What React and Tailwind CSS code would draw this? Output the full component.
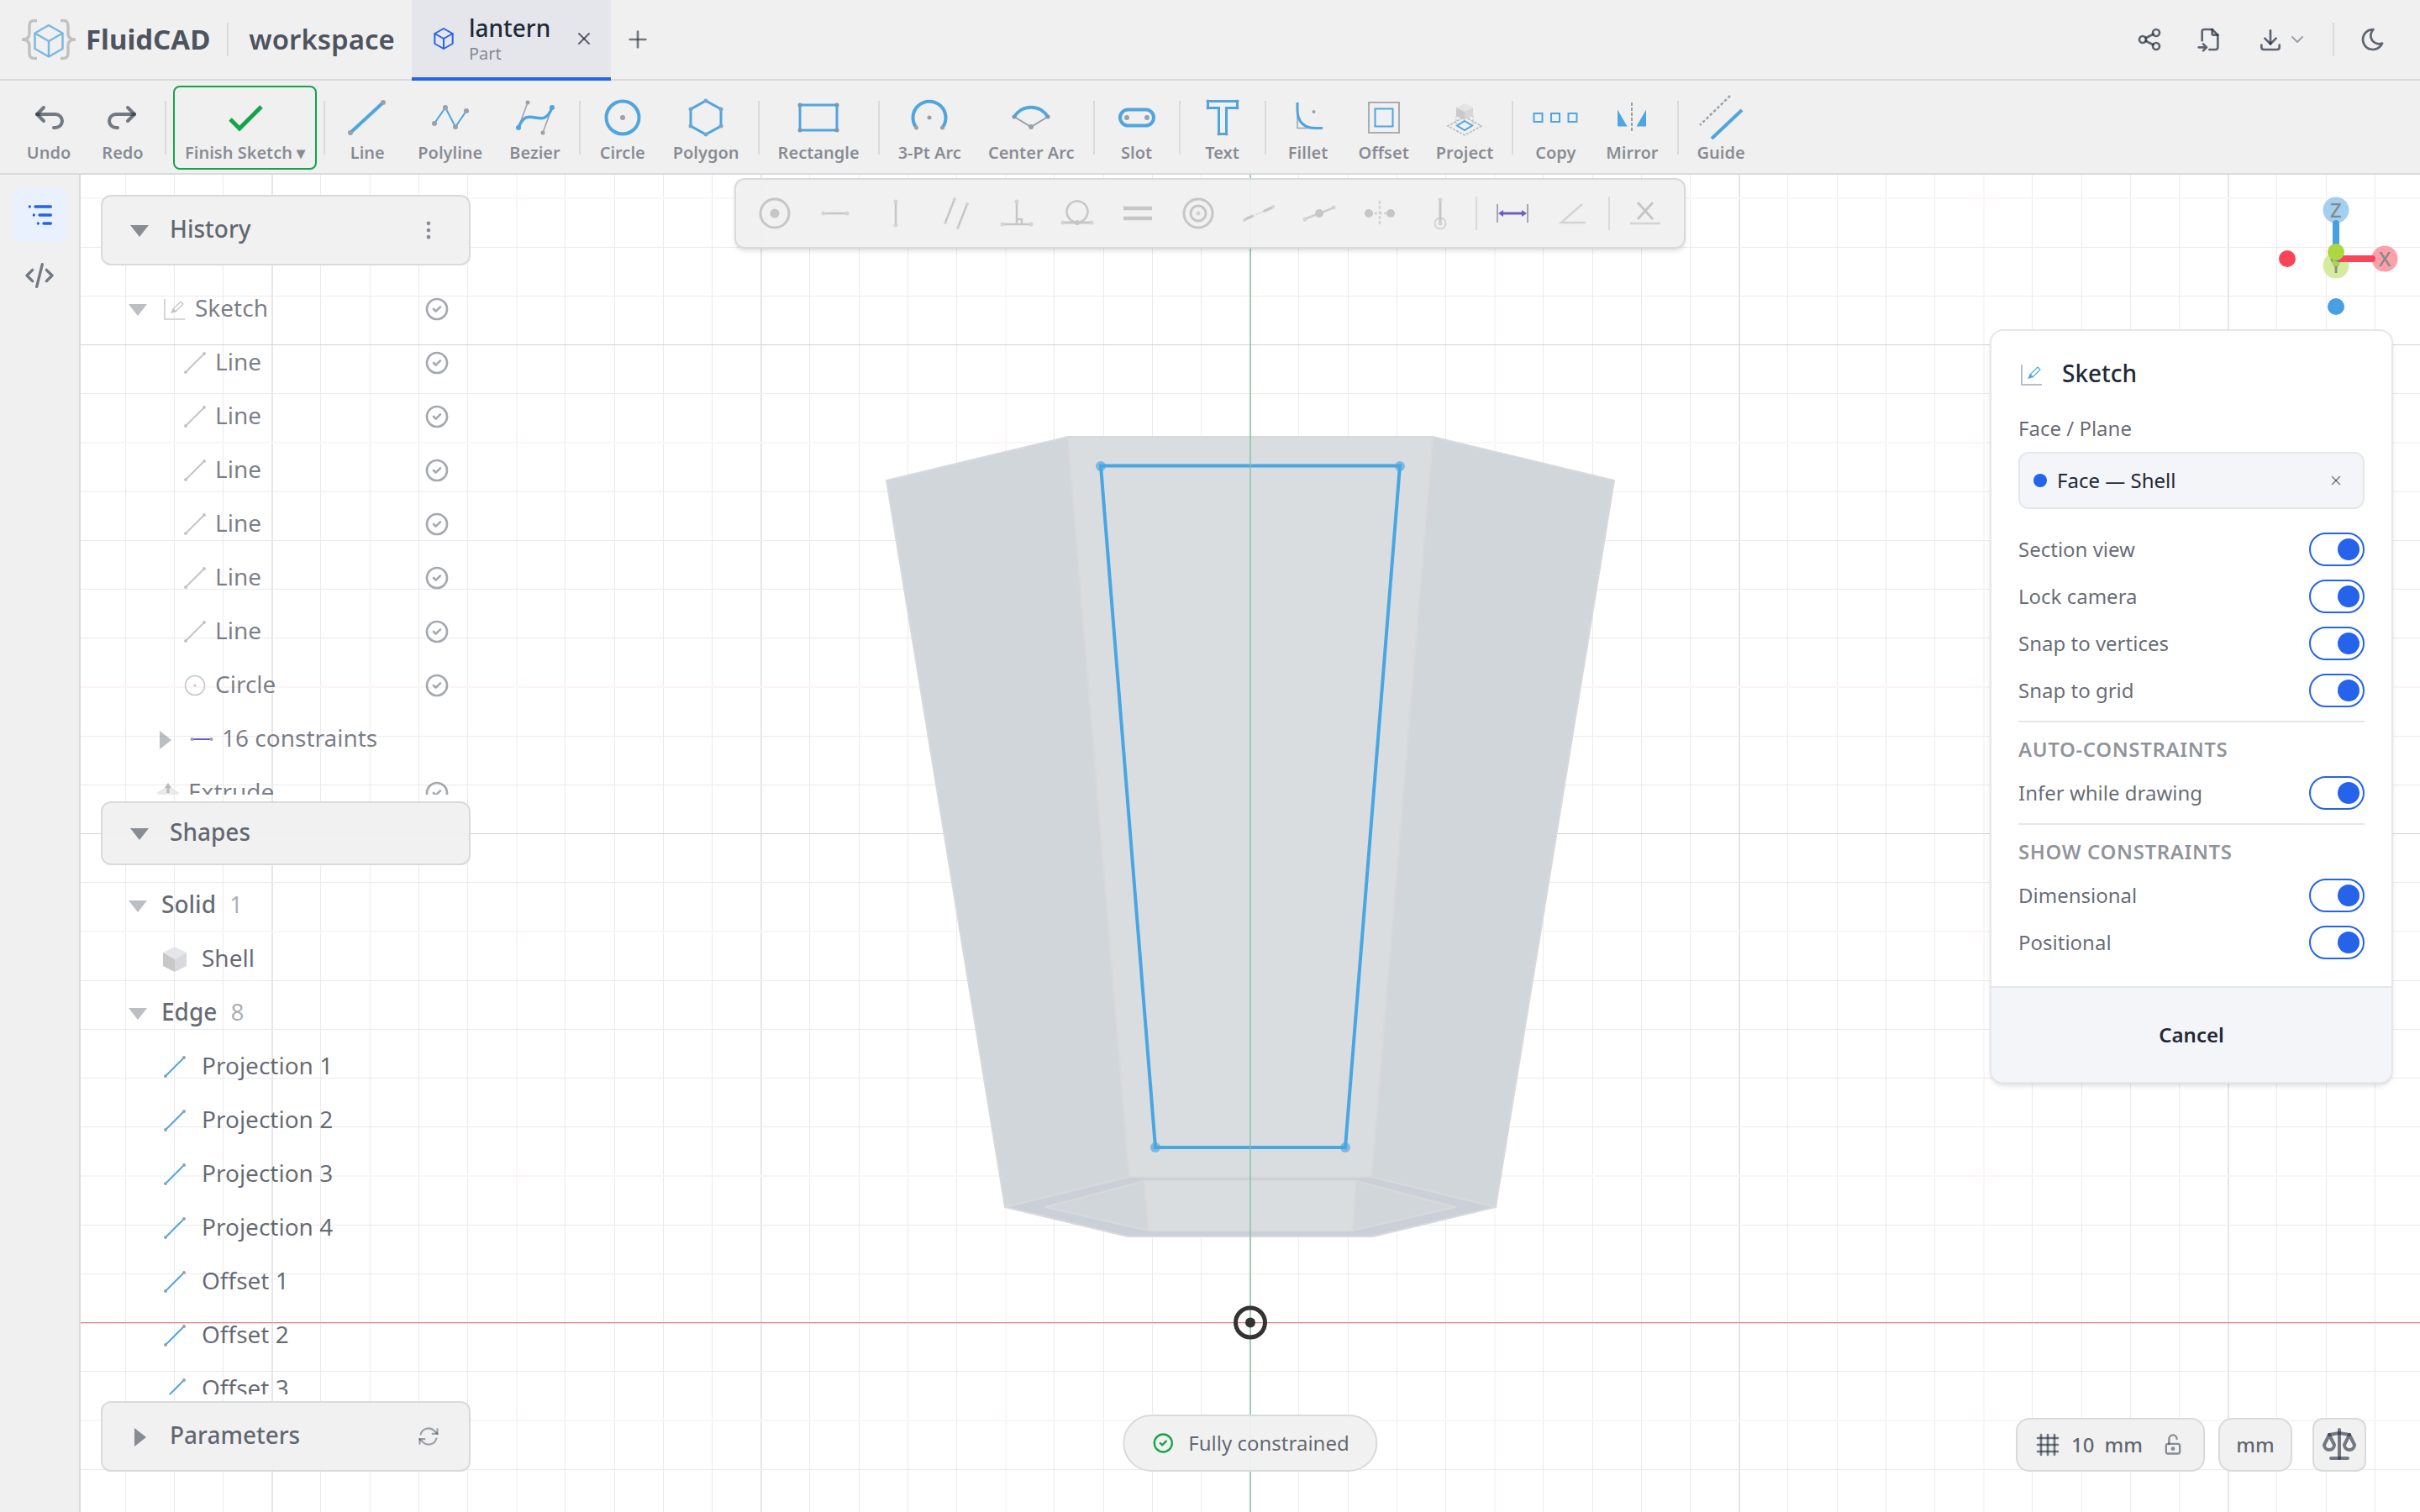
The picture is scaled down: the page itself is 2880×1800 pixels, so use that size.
import { useState } from "react";
import {
  TbArrowBackUp,
  TbArrowForwardUp,
  TbBox,
  TbChevronDown,
  TbCircleCheck,
  TbCode,
  TbDotsVertical,
  TbDownload,
  TbFileImport,
  TbGrid4X4,
  TbListTree,
  TbLockOpen,
  TbMoon,
  TbPlus,
  TbScale,
  TbShare,
  TbX,
} from "react-icons/tb";

const BLUE = "#4ea5e0";
const GREY = "#9aa0a8";
const MUTED = "#c5c6c7";
const FAINT = "#d3d4d5";
const PURPLE = "#6f5bc8";

const Dots = ({ points, fill = GREY, r = 3 }) =>
  points.map(([x, y]) => (
    <circle key={`${x},${y}`} cx={x} cy={y} r={r} fill={fill} stroke="none" />
  ));

// Drawings of the sketch tools, centred on 0,0 in a 60px box
const toolIcons = {
  finish: <path d="M-18 2L-7 13L19 -13" stroke="#16a34a" strokeWidth="5" />,
  line: (
    <>
      <path d="M-20 18L19 -18" strokeWidth="4" />
      <Dots points={[[-20, 18], [19, -18]]} />
    </>
  ),
  polyline: (
    <>
      <path d="M-19 7L-6 -12L6 11L19 -8" strokeWidth="2" />
      <Dots points={[[-19, 7], [-6, -12], [6, 11], [19, -8]]} />
    </>
  ),
  bezier: (
    <>
      <path d="M-20 12L-9 -18M20 -12L9 18" stroke={GREY} strokeWidth="1.5" />
      <path d="M-20 12C-9 -18 9 18 20 -12" strokeWidth="3.5" />
      <Dots points={[[-9, -18], [9, 18]]} r={2.5} />
      <Dots points={[[-20, 12], [20, -12]]} fill={BLUE} />
    </>
  ),
  circle: (
    <>
      <circle r="19.5" strokeWidth="4" />
      <Dots points={[[0, 0]]} />
    </>
  ),
  polygon: (
    <>
      <path d="M0 -20L18 -10V10L0 20L-18 10V-10Z" strokeWidth="3" />
      <Dots points={[[0, -20], [18, -10], [18, 10], [0, 20], [-18, 10], [-18, -10]]} fill="#7aa5c6" r={2.5} />
    </>
  ),
  rectangle: (
    <>
      <path d="M-22 -15H22V15H-22Z" strokeWidth="3" />
      <Dots points={[[-22, -15], [22, -15], [22, 15], [-22, 15]]} fill="#7b98ae" r={2.5} />
    </>
  ),
  arc3: (
    <>
      <path d="M-15.5 12A19.5 19.5 0 1 1 15.5 12" strokeWidth="4" />
      <Dots points={[[0, 0], [-15.5, 12], [15.5, 12]]} r={2.5} />
    </>
  ),
  centerArc: (
    <>
      <path d="M-20 -1L0 11L20 -1" stroke={GREY} strokeWidth="2" />
      <path d="M-20 -1A23.3 23.3 0 0 1 20 -1" strokeWidth="4" />
      <Dots points={[[0, 11]]} />
      <Dots points={[[-20, -1], [20, -1]]} fill="#7b98ae" r={2.5} />
    </>
  ),
  slot: (
    <>
      <rect x="-20" y="-9.5" width="40" height="19" rx="9.5" strokeWidth="4" />
      <Dots points={[[-12, 0], [12, 0]]} />
    </>
  ),
  text: (
    <>
      <path d="M-17.5 -19.5H17.5V-11.5H4.5V19.5H-4.5V-11.5H-17.5Z" strokeWidth="3" />
      <Dots points={[[-17.5, -19.5], [17.5, -19.5], [-17.5, -11.5], [17.5, -11.5], [4.5, 19.5], [-4.5, 19.5]]} fill="#6b9dc4" r={2} />
    </>
  ),
  fillet: (
    <>
      <path d="M-13 -2V12.5H2" stroke={GREY} strokeWidth="1.5" />
      <path d="M-13 -18V-10C-13 5 -6 12.5 9 12.5H17" strokeWidth="3" />
      <Dots points={[[6.5, -7]]} r={2} />
    </>
  ),
  offset: (
    <>
      <rect x="-18" y="-18" width="36" height="36" stroke="#a8adb4" strokeWidth="2" />
      <rect x="-10.5" y="-10.5" width="21" height="21" strokeWidth="2" />
    </>
  ),
  project: (
    <>
      <path d="M0 -1L20 10L0 21L-20 10Z" stroke="#b3b5b8" strokeWidth="1.5" strokeDasharray="3 1.5" />
      <path d="M0 4L9 9.5L0 15L-9 9.5Z" strokeWidth="2" />
      <path d="M0 -17L10 -12L0 -7L-10 -12Z" fill="#e3e4e6" stroke="none" />
      <path d="M-10 -12L0 -7V3L-10 -2Z" fill="#c9c9ca" stroke="none" />
      <path d="M10 -12L0 -7V3L10 -2Z" fill="#d6d7d9" stroke="none" />
      <path d="M-10 -2V8M10 -2V8" stroke="#b3b5b8" strokeDasharray="2 2" />
    </>
  ),
  copy: (
    <g strokeWidth="2">
      <rect x="-25.5" y="-5" width="10" height="10" />
      <rect x="-5" y="-5" width="10" height="10" />
      <rect x="15.5" y="-5" width="10" height="10" />
    </g>
  ),
  mirror: (
    <>
      <path d="M0 -18V18" stroke={GREY} strokeWidth="2" strokeDasharray="4 2" />
      <path d="M-17 -9.5L-5.5 10.5H-17ZM17 -9.5L5.5 10.5H17Z" fill={BLUE} stroke="none" />
    </>
  ),
  guide: (
    <>
      <path d="M11 -26L-25 9" stroke={GREY} strokeWidth="2.5" strokeDasharray="3.5 2.5" />
      <path d="M25 -9L-11 25" strokeWidth="4" />
    </>
  ),
};

const toolGroups = [
  [
    ["Line", "line"],
    ["Polyline", "polyline"],
    ["Bezier", "bezier"],
  ],
  [
    ["Circle", "circle"],
    ["Polygon", "polygon"],
  ],
  [["Rectangle", "rectangle"]],
  [
    ["3-Pt Arc", "arc3"],
    ["Center Arc", "centerArc"],
  ],
  [["Slot", "slot"]],
  [["Text", "text"]],
  [
    ["Fillet", "fillet"],
    ["Offset", "offset"],
    ["Project", "project"],
  ],
  [
    ["Copy", "copy"],
    ["Mirror", "mirror"],
  ],
  [["Guide", "guide"]],
];

const constraintGroups = [
  [
    ["Coincident", <><circle r="17" strokeWidth="3" /><Dots points={[[0, 0]]} fill={MUTED} r={5.5} /></>],
    ["Horizontal", <><path d="M-14 0H14" strokeWidth="2.5" /><Dots points={[[-14, 0], [14, 0]]} fill={FAINT} r={2.5} /></>],
    ["Vertical", <><path d="M0 -14V14" strokeWidth="2.5" /><Dots points={[[0, -14], [0, 14]]} fill={FAINT} r={2.5} /></>],
    ["Parallel", <><path d="M-2 -17L-13 11M13 -11L2 17" strokeWidth="2.5" /><Dots points={[[-2, -17], [-13, 11], [13, -11], [2, 17]]} fill={FAINT} r={2} /></>],
    ["Perpendicular", <><path d="M-17 13H17M0 -14V13M0 7H6V13" strokeWidth="2.5" /><Dots points={[[-17, 13], [17, 13], [0, -14]]} fill={FAINT} r={2.5} /></>],
    ["Tangent", <><circle cy="-2" r="12.5" strokeWidth="2.5" /><path d="M-17 11H17" strokeWidth="3" /><Dots points={[[0, 11]]} fill={MUTED} /><Dots points={[[-17, 11], [17, 11]]} fill={FAINT} r={2.5} /></>],
    ["Equal", <path d="M-17 -6H17M-17 6H17" strokeWidth="4.5" />],
    ["Concentric", <><circle r="17" strokeWidth="3" /><circle r="9" strokeWidth="3" /><Dots points={[[0, 0]]} fill={FAINT} r={2.5} /></>],
    ["Collinear", <><path d="M-16 7L-7 3M6 -2.5L16 -7" strokeWidth="3.5" /><path d="M-7 3L6 -2.5" stroke={FAINT} strokeWidth="2" strokeDasharray="2 2" /><Dots points={[[-17, 8], [17, -8]]} fill={FAINT} r={2} /></>],
    ["Midpoint", <><path d="M-18 7L18 -7" stroke="#cdcecf" strokeWidth="2.5" /><Dots points={[[0, 0]]} fill={MUTED} r={5} /><Dots points={[[-17, 7], [17, -7]]} fill={FAINT} r={2.5} /></>],
    ["Symmetric", <><path d="M-13 0H13M0 -15V15" stroke={FAINT} strokeWidth="2.5" strokeDasharray="4 2" /><Dots points={[[-13, 0], [13, 0]]} fill={MUTED} r={5} /></>],
    ["Fix", <><circle cy="12" r="6.5" stroke={FAINT} strokeWidth="2" /><path d="M0 -16V12" strokeWidth="3" /><Dots points={[[0, -16], [0, 12]]} fill={FAINT} r={2.5} /></>],
  ],
  [
    ["Dimension", <><path d="M-18 -11V11M18 -11V11" stroke="#a3a7b0" strokeWidth="2" /><path d="M-14 0H14" stroke={PURPLE} strokeWidth="3" /><path d="M-17 0L-11 -4V4ZM17 0L11 -4V4Z" fill={PURPLE} stroke="none" /></>],
    ["Angle", <path d="M11 -11L-14 11H15" stroke={FAINT} strokeWidth="2.5" />],
  ],
  [
    ["Remove constraint", <><path d="M-9 -13L9 7M9 -13L-9 7" strokeWidth="3" /><path d="M-18 12H18" stroke={FAINT} strokeWidth="2.5" /></>],
  ],
];

const Separator = ({ className = "h-16 mx-1" }) => (
  <span className={`w-0.5 shrink-0 bg-[#d9dadb] ${className}`} />
);

const Caret = ({ open, className }) => (
  <svg viewBox="-12 -12 24 24" className={`size-6 shrink-0 ${className}`} fill="currentColor">
    <path d={open ? "M-11 -6H11L0 8Z" : "M-6 -10V12L8 1Z"} />
  </svg>
);

const Logo = () => (
  <svg viewBox="0 0 68 52" className="h-[52px] w-[68px] shrink-0" fill="none">
    <g stroke="#c0c1c2" strokeWidth="3.5">
      <path d="M20 3.5H17C12 3.5 11 6 11 10V19C11 24 8 26 2 26C8 26 11 28 11 33V42C11 46 12 48.5 17 48.5H20" />
      <path d="M48 3.5H51C56 3.5 57 6 57 10V19C57 24 60 26 66 26C60 26 57 28 57 33V42C57 46 56 48.5 51 48.5H48" />
    </g>
    <path
      d="M34 9L50.5 18.5V37L34 46.5L17.5 37V18.5ZM17.5 18.5L34 28L50.5 18.5M34 28V46.5"
      stroke="#7ab8e3"
      strokeWidth="2.5"
      strokeLinejoin="round"
    />
  </svg>
);

const Header = () => (
  <header className="flex h-24 items-stretch border-b-2 border-[#d9dadb] bg-[#f0f0f0] pl-6">
    <div className="flex items-center">
      <Logo />
      <h1 className="ml-2.5 text-[33px] font-bold text-[#1f2937]/80">FluidCAD</h1>
      <Separator className="mr-6 ml-5 h-10" />
      <span className="text-[33px] font-semibold text-[#1f2937]/80">workspace</span>
    </div>
    <div className="-mb-0.5 ml-5 flex items-center gap-3.5 border-b-4 border-[#2563eb] bg-[#e4e6eb] pr-5 pl-5.5">
      <TbBox className="size-8 stroke-[1.5] text-[#2563eb]" />
      <div className="pr-3.5">
        <div className="text-[28px] leading-9 font-medium text-[#1f2937]">lantern</div>
        <div className="text-xl leading-[26px] text-[#1f2937]/50">Part</div>
      </div>
      <button aria-label="Close tab" className="text-[#1f2937]/70">
        <TbX className="size-6" />
      </button>
    </div>
    <button aria-label="New tab" className="ml-4 text-[#1f2937]/60">
      <TbPlus className="size-8" />
    </button>
    <div className="ml-auto flex items-center pr-10 text-[#1f2937]/70">
      <button aria-label="Share" className="mr-10">
        <TbShare className="size-8" />
      </button>
      <button aria-label="Import" className="mr-10">
        <TbFileImport className="size-8" />
      </button>
      <button aria-label="Export" className="flex items-center gap-1">
        <TbDownload className="size-8" />
        <TbChevronDown className="size-6 text-[#1f2937]/40" />
      </button>
      <Separator className="mx-7.5 h-10" />
      <button aria-label="Dark mode">
        <TbMoon className="size-8" />
      </button>
    </div>
  </header>
);

const ToolButton = ({ label, active, children }) => (
  <button
    className={`flex shrink-0 flex-col items-center rounded-lg border-2 px-3 py-1.5 ${
      active ? "border-[#16a34a]" : "border-transparent"
    }`}
  >
    <span className="flex h-15 w-14 items-center justify-center">{children}</span>
    <span className="text-xl leading-6 font-semibold whitespace-nowrap text-[#1f2937]/50">{label}</span>
  </button>
);

const ToolIcon = ({ name }) => (
  <svg viewBox="-30 -30 60 60" className="size-15 shrink-0" fill="none" stroke={BLUE}>
    {toolIcons[name]}
  </svg>
);

const SketchToolbar = () => (
  <nav className="flex h-28 items-center gap-1 border-b-2 border-[#d9dadb] bg-[#f0f0f0] px-4 pt-0.5">
    <ToolButton label="Undo">
      <TbArrowBackUp className="size-12 text-[#1f2937]/60" />
    </ToolButton>
    <ToolButton label="Redo">
      <TbArrowForwardUp className="size-12 text-[#1f2937]/60" />
    </ToolButton>
    <Separator />
    <ToolButton label="Finish Sketch ▾" active>
      <ToolIcon name="finish" />
    </ToolButton>
    {toolGroups.map((group) => [
      <Separator key={`${group[0][0]}-sep`} />,
      ...group.map(([label, icon]) => (
        <ToolButton key={label} label={label}>
          <ToolIcon name={icon} />
        </ToolButton>
      )),
    ])}
  </nav>
);

const ConstraintBar = () => (
  <div className="absolute top-1 left-1/2 flex h-21 -translate-x-1/2 items-center gap-1 rounded-xl border-2 border-[#d9dadb] bg-[#f0f0f0]/95 px-3 shadow-md">
    {constraintGroups.map((group, i) => [
      i > 0 && <Separator key={`sep-${i}`} className="mx-1 h-10" />,
      ...group.map(([label, drawing]) => (
        <button key={label} aria-label={label} className="flex h-15 w-17 items-center justify-center">
          <svg viewBox="-24 -24 48 48" className="size-12" fill="none" stroke={MUTED}>
            {drawing}
          </svg>
        </button>
      )),
    ])}
  </div>
);

const CELL = 58.2;
const steps = (from, to) => Array.from({ length: to - from + 1 }, (_, i) => from + i);

const Viewport = () => (
  <svg className="absolute inset-0 size-full" fill="none">
    <svg x="50%" y="1366" overflow="visible" shapeRendering="crispEdges">
      {steps(-25, 25).map((n) => (
        <rect
          key={n}
          x={Math.round(n * CELL - 0.8)}
          y="-1400"
          width={n % 5 === 0 ? 2 : 1}
          height="2000"
          fill={n % 10 === 0 ? "#e6e6e6" : n % 5 === 0 ? "#fbf5f5" : "#ebebeb"}
        />
      ))}
      {steps(-23, 5).map((n) => (
        <rect
          key={n}
          x="-1500"
          y={Math.round(n * CELL)}
          width="3000"
          height={(n + 25) % 5 === 2 ? 2 : 1}
          fill={n % 10 === 0 ? "#d2d3d5" : (n + 25) % 5 === 2 ? "#fbf5f5" : "#ebebeb"}
        />
      ))}
    </svg>
    <svg x="50%" y="0" overflow="visible">
      <g stroke="#d8d9dc" strokeWidth="2" strokeLinejoin="round">
        <path d="M-217 312L-433 364L-292 1229L-144 1193Z" fill="#d1d6da" />
        <path d="M217 312L433 364L292 1229L144 1193Z" fill="#d1d6da" />
        <path d="M-217 312H217L144 1193H-144Z" fill="#dadde0" />
        <path d="M-292 1229L-144 1193H144L292 1229L146 1264H-146Z" fill="#cbd0d8" />
        <path d="M-244 1229L-126 1198H126L244 1229L121 1257H-121Z" fill="#d1d6da" />
        <path d="M-126 1198H126L121 1257H-121Z" fill="#dadde0" />
      </g>
      <path d="M-178 346.5H178L113 1158H-113Z" stroke="#48a6e3" strokeWidth="4" />
      <g opacity="0.65">
        <Dots points={[[-178, 347], [178, 347], [113, 1158], [-113, 1158]]} fill="#48a6e3" r={6} />
      </g>
      <path d="M0 0V2000" stroke="#7fc3a1" strokeOpacity="0.7" strokeWidth="2" />
      <path d="M-1500 1366.5H1500" stroke="#d9868d" />
      <path d="M-1500 1367.5H1500" stroke="#f5d8da" />
      <circle cy="1366.5" r="17.5" stroke="#333333" strokeWidth="5" />
      <circle cy="1366.5" r="6" fill="#333333" />
    </svg>
  </svg>
);

const AxisGizmo = () => (
  <svg
    viewBox="0 0 150 150"
    className="absolute top-6 right-6 size-[150px]"
    fontFamily="Noto Sans, sans-serif"
    fontSize="24"
    fontWeight="500"
    textAnchor="middle"
  >
    <circle cx="74" cy="18" r="15.5" fill="#a3cff1" />
    <circle cx="132" cy="76" r="15.5" fill="#fca0ab" />
    <circle cx="74" cy="84" r="15.5" fill="#d5eba0" />
    <text x="74" y="27" fill="#888888">Z</text>
    <text x="132" y="85" fill="#888888">X</text>
    <text x="74" y="93" fill="#888888">Y</text>
    <path d="M74 34V76" stroke="#489fe3" strokeWidth="8" strokeLinecap="round" />
    <path d="M76 76H117" stroke="#f94459" strokeWidth="8" strokeLinecap="round" />
    <path d="M70 74H78V82L74 86L70 82Z" fill="#acd740" />
    <path d="M72 78L76 80L80 78V74H72Z" fill="#489fe3" />
    <path d="M76 80H90V72H80Z" fill="#f94459" />
    <circle cx="74" cy="68" r="10" fill="#acd740" />
    <circle cx="16" cy="76" r="10" fill="#f94459" />
    <circle cx="74" cy="133" r="10" fill="#489fe3" />
  </svg>
);

const RowLine = ({ color }) => (
  <svg viewBox="-16 -16 32 32" className="size-8" fill="none">
    <path d="M-11 11L11 -11" stroke={color} strokeWidth="2" />
    <Dots points={[[-11, 11], [11, -11]]} r={2} fill={color === BLUE ? GREY : color} />
  </svg>
);

const SketchIcon = ({ line = "#c9cacb", pen = "#c0c1c2" }) => (
  <svg viewBox="-16 -16 32 32" className="size-8 shrink-0" fill="none">
    <path d="M-12 -12V12H12" stroke={line} strokeWidth="1.5" />
    <path d="M-2 0L7 -9L10 -6L1 3Z" stroke={pen} strokeWidth="1.2" />
    <path d="M-2 -1L2 3L-5 5Z" fill={pen} />
  </svg>
);

const CubeIcon = () => (
  <svg viewBox="-16 -16 32 32" className="size-8">
    <path d="M0 -15L14 -8L0 0L-14 -8Z" fill="#e5e6e9" />
    <path d="M-14 -8L0 0V15L-14 8Z" fill="#c8c8c9" />
    <path d="M14 -8L0 0V15L14 8Z" fill="#d8d9dc" />
  </svg>
);

const historyRows = [
  { label: "Sketch", open: true, pad: "pl-8", icon: <SketchIcon />, check: true },
  ...Array.from({ length: 6 }, () => ({
    label: "Line",
    pad: "pl-24",
    icon: <RowLine color="#c3c4c6" />,
    check: true,
  })),
  {
    label: "Circle",
    pad: "pl-24",
    check: true,
    icon: (
      <svg viewBox="-16 -16 32 32" className="size-8" fill="none">
        <circle r="11.5" stroke="#c3c4c6" strokeWidth="1.5" />
        <circle r="1.5" fill="#c3c4c6" />
      </svg>
    ),
  },
  {
    label: "16 constraints",
    open: false,
    pad: "pl-16",
    icon: (
      <svg viewBox="-16 -16 32 32" className="size-8">
        <path d="M-11 0H11" stroke={PURPLE} strokeWidth="2" />
        <Dots points={[[-11.5, 0], [11.5, 0]]} r={2} />
      </svg>
    ),
  },
  {
    label: "Extrude",
    pad: "pl-16",
    check: true,
    icon: (
      <svg viewBox="-16 -16 32 32" className="size-8">
        <path d="M0 -9L14 0L0 9L-14 0Z" fill="#e9e9ea" />
        <path d="M0 -10V0" stroke="#b9babc" strokeWidth="3" />
        <path d="M-4 -6L0 -12L4 -6Z" fill="#b9babc" />
      </svg>
    ),
  },
];

const edges = [
  "Projection 1",
  "Projection 2",
  "Projection 3",
  "Projection 4",
  "Offset 1",
  "Offset 2",
  "Offset 3",
];

const SectionHeader = ({ title, open, tall = true, children }) => (
  <div
    className={`flex shrink-0 items-center rounded-xl border-2 border-[#d9dadb] bg-[#f0f0f0]/95 pr-8.5 pl-8 ${
      tall ? "h-21" : "h-19"
    }`}
  >
    <button className="flex flex-1 items-center gap-6">
      <Caret open={open} className="text-[#1f2937]/50" />
      <span className="pb-1 text-[28px] leading-9 font-medium text-[#1f2937]/70">{title}</span>
    </button>
    {children}
  </div>
);

const ScrollArea = ({ children }) => (
  <div className="mb-2 min-h-0 flex-1 basis-0 overflow-hidden">{children}</div>
);

const GroupRow = ({ label, count }) => (
  <li className="flex h-16 items-center pl-8 text-[28px]">
    <Caret open className="mr-4 text-[#1f2937]/30" />
    <span className="pb-1 font-medium text-[#1f2937]/70">{label}</span>
    <span className="ml-4 pb-1 text-[#1f2937]/40">{count}</span>
  </li>
);

const ShapeRow = ({ label, icon }) => (
  <li className="flex h-16 items-center gap-4 pl-18 text-[28px] text-[#1f2937]/70">
    {icon}
    <span className="pb-1">{label}</span>
  </li>
);

const TreePanel = () => (
  <aside className="relative flex w-[464px] flex-col pt-6 pb-12 pl-6">
    <SectionHeader title="History" open>
      <button aria-label="History options" className="text-[#1f2937]/50">
        <TbDotsVertical className="size-7" />
      </button>
    </SectionHeader>
    <ScrollArea>
      <ul className="pt-5">
        {historyRows.map((row, i) => (
          <li key={i} className={`flex h-16 items-center pr-6 ${row.pad}`}>
            {row.open !== undefined && <Caret open={row.open} className="mr-4 text-[#1f2937]/30" />}
            {row.icon}
            <span className="ml-2 pb-1 text-[28px] text-[#1f2937]/60">{row.label}</span>
            {row.check && <TbCircleCheck className="ml-auto size-8 text-[#1f2937]/40" />}
          </li>
        ))}
      </ul>
    </ScrollArea>
    <SectionHeader title="Shapes" open tall={false} />
    <ScrollArea>
      <ul className="pt-4">
        <GroupRow label="Solid" count={1} />
        <ShapeRow label="Shell" icon={<CubeIcon />} />
        <GroupRow label="Edge" count={8} />
        {edges.map((label) => (
          <ShapeRow key={label} label={label} icon={<RowLine color={BLUE} />} />
        ))}
      </ul>
    </ScrollArea>
    <SectionHeader title="Parameters" open={false}>
      <button aria-label="Refresh parameters" className="text-[#1f2937]/40">
        <svg viewBox="0 0 24 24" className="size-7" fill="none" stroke="currentColor" strokeWidth="1.8" strokeLinecap="round">
          <path d="M16 9.3H21V4.4" />
          <path d="M3 19.6V14.7H8" />
          <path d="M3 14.7L6.2 17.8A8.25 8.25 0 0 0 20 14.1" />
          <path d="M4 9.9A8.25 8.25 0 0 1 17.8 6.2L21 9.3" />
        </svg>
      </button>
    </SectionHeader>
  </aside>
);

const Toggle = ({ label }) => {
  const [on, setOn] = useState(true);

  return (
    <label className="flex h-10 items-center justify-between text-2xl text-[#1f2937]/70">
      {label}
      <input
        type="checkbox"
        checked={on}
        onChange={(e) => setOn(e.target.checked)}
        className="flex h-10 w-[66px] appearance-none items-center rounded-full border-2 border-[#2563eb] px-1 before:size-[26px] before:rounded-full before:bg-[#2563eb] before:content-[''] checked:justify-end"
      />
    </label>
  );
};

const SketchPanel = () => (
  <section className="absolute top-46 right-8 w-[480px] overflow-hidden rounded-2xl border-2 border-[#e5e7eb] bg-white shadow-md">
    <div className="p-8">
      <h2 className="flex h-10 items-center gap-5 text-[28px] font-medium text-[#1f2937]">
        <SketchIcon line="#a3a9b3" pen={BLUE} />
        <span className="pb-1">Sketch</span>
      </h2>
      <div className="mt-7 mb-3 text-2xl text-[#1f2937]/70">Face / Plane</div>
      <div className="mb-7 flex h-17 items-center rounded-xl border-2 border-[#e5e7eb] bg-[#f4f5f9] px-4 text-2xl text-[#1f2937]">
        <span className="mr-3 size-4 rounded-full bg-[#2563eb]" />
        Face — Shell
        <button aria-label="Clear face" className="ml-auto flex size-8 items-center justify-center text-[#1f2937]/60">
          <TbX className="size-[18px]" />
        </button>
      </div>
      <div className="flex flex-col gap-4">
        <Toggle label="Section view" />
        <Toggle label="Lock camera" />
        <Toggle label="Snap to vertices" />
        <Toggle label="Snap to grid" />
        <h3 className="border-t-2 border-[#e5e7eb] pt-4 text-2xl font-semibold tracking-wide text-[#1f2937]/50 uppercase">
          Auto-constraints
        </h3>
        <Toggle label="Infer while drawing" />
        <h3 className="border-t-2 border-[#e5e7eb] pt-4 text-2xl font-semibold tracking-wide text-[#1f2937]/50 uppercase">
          Show constraints
        </h3>
        <Toggle label="Dimensional" />
        <Toggle label="Positional" />
      </div>
    </div>
    <button className="h-[114px] w-full border-t-2 border-[#e5e7eb] bg-[#f4f5f9] text-2xl font-semibold text-[#1f2937]">
      Cancel
    </button>
  </section>
);

const StatusPill = () => (
  <div className="absolute bottom-12 left-1/2 flex h-17 -translate-x-1/2 items-center gap-4 rounded-full border-2 border-[#d9dadb] bg-[#f0f0f0]/95 px-8 text-2xl whitespace-nowrap text-[#1f2937]/70">
    <TbCircleCheck className="size-7 text-[#16a34a]" />
    Fully constrained
  </div>
);

const UnitControls = () => (
  <div className="absolute right-16 bottom-12 flex text-2xl font-medium text-[#1f2937]/70">
    <div className="flex h-16 items-center rounded-2xl border-2 border-[#d9dadb] bg-[#f0f0f0]/95 px-5">
      <TbGrid4X4 className="mr-3 size-8 text-[#1f2937]/60" />
      <button>10</button>
      <span className="ml-3">mm</span>
      <button aria-label="Lock grid size" className="mr-0.5 ml-5.5 text-[#1f2937]/50">
        <TbLockOpen className="size-7" />
      </button>
    </div>
    <button className="ml-4 h-16 w-22 rounded-2xl border-2 border-[#d9dadb] bg-[#f0f0f0]/95">mm</button>
    <button
      aria-label="Measure"
      className="ml-6 flex size-16 items-center justify-center rounded-xl border-2 border-[#d9dadb] bg-[#f0f0f0]/95 text-[#1f2937]/60"
    >
      <TbScale className="size-12" />
    </button>
  </div>
);

const App = () => (
  <div className="flex h-screen flex-col overflow-hidden bg-white font-['Noto_Sans',sans-serif]">
    <Header />
    <SketchToolbar />
    <div className="relative flex min-h-0 flex-1">
      <nav className="flex w-24 shrink-0 flex-col items-center gap-2 border-r-2 border-[#d9dadb] bg-[#f0f0f0] pt-4">
        <button aria-label="Model tree" className="flex size-16 items-center justify-center rounded-lg bg-[#e9f0fe] text-[#2563eb]">
          <TbListTree className="size-10" />
        </button>
        <button aria-label="Code" className="flex size-16 items-center justify-center rounded-lg text-[#1f2937]/60">
          <TbCode className="size-10" />
        </button>
      </nav>
      <main className="relative flex min-w-0 flex-1">
        <Viewport />
        <TreePanel />
        <AxisGizmo />
        <SketchPanel />
        <StatusPill />
        <UnitControls />
      </main>
      <ConstraintBar />
    </div>
  </div>
);

export default App;
